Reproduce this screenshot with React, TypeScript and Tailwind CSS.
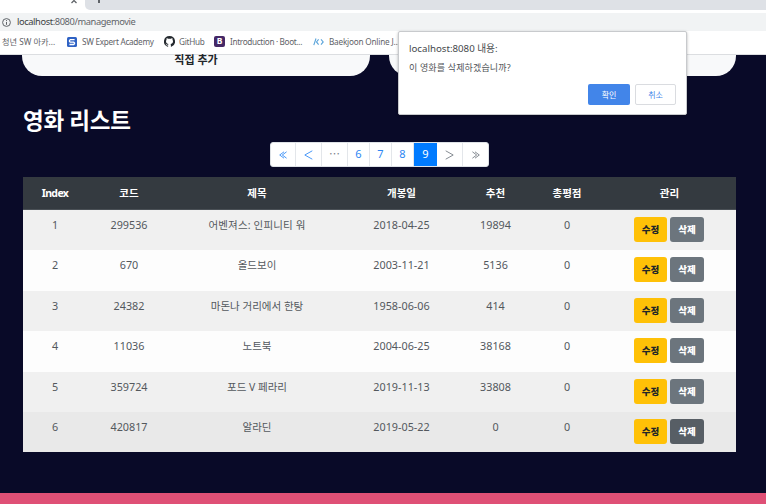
import React from "react";

const movies = [
  { id: 1, code: "299536", title: "어벤져스: 인피니티 워", date: "2018-04-25", likes: "19894", h: "h-[40px]", bg: "bg-[#f0f0f0]", gap: "tracking-[0.15px]" },
  { id: 2, code: "670", title: "올드보이", date: "2003-11-21", likes: "5136", h: "h-[41px]", bg: "bg-[#fdfdfd]", gap: "" },
  { id: 3, code: "24382", title: "마돈나 거리에서 한탕", date: "1958-06-06", likes: "414", h: "h-[40px]", bg: "bg-[#f0f0f0]", gap: "" },
  { id: 4, code: "11036", title: "노트북", date: "2004-06-25", likes: "38168", h: "h-[41px]", bg: "bg-[#fdfdfd]", gap: "" },
  { id: 5, code: "359724", title: "포드 V 페라리", date: "2019-11-13", likes: "33808", h: "h-[40px]", bg: "bg-[#f0f0f0]", gap: "" },
  { id: 6, code: "420817", title: "알라딘", date: "2019-05-22", likes: "0", h: "h-[40px]", bg: "bg-[#e9e9e9]", gap: "" },
];

const columns = "grid grid-cols-[64px_84px_172px_117px_71px_72px_133px]";
const uiFont = "font-['Noto_Sans','Noto_Sans_CJK_KR',sans-serif]";

function BrowserChrome() {
  return (
    <header className="h-[55px] shrink-0 bg-white text-[#5f6368]">
      <div className="flex h-[10px] overflow-hidden bg-white">
        <div className="flex w-[85px] shrink-0 justify-end pr-[7px]">
          <svg width="8" height="5" viewBox="0 0 8 5" fill="none" stroke="#5f6368" strokeWidth="1.3">
            <path d="M1.5 3 4 .5 6.5 3" />
          </svg>
        </div>
        <div className="flex-1 rounded-bl-[5px] bg-[#dee1e6] pl-[13px]">
          <div className="h-[3px] w-[1.5px] bg-[#5f6368]" />
        </div>
      </div>
      <div className="mt-[3px] flex h-[18px] items-center bg-[#f1f3f4] pl-[2px]">
        <svg width="9" height="9" viewBox="0 0 9 9" fill="none" stroke="#5f6368" strokeWidth="1">
          <circle cx="4.5" cy="4.5" r="3.9" />
          <path d="M4.5 4v2.8M4.5 2.1v1" />
        </svg>
        <span className="ml-[6px] whitespace-nowrap text-[9.3px] leading-[18px] tracking-[-0.4px]">
          <span className="text-[#3c4043]">localhost</span>:8080/managemovie
        </span>
      </div>
      <nav className="flex h-[24px] items-center border-b border-[#dcdee1] pb-[2px] pl-[2px] text-[8.2px] leading-[22px] text-[#5f6368]">
        <span className="w-[65px] whitespace-nowrap">청년 SW 아카...</span>
        <div className="flex w-[97px] items-center">
          <svg width="10" height="10" viewBox="0 0 10 10">
            <rect width="10" height="10" rx="1.5" fill="#2f62c4" />
            <path d="M7.6 2.6H3.3L2.5 3.5v1l.7.7h3.6l.7.7v.8l-.8.8H2.4" fill="none" stroke="white" strokeWidth="1.3" />
          </svg>
          <span className="ml-[5px] whitespace-nowrap tracking-[-0.3px]"><span className="tracking-[-0.28px]">SW Expert Academy</span></span>
        </div>
        <div className="flex w-[50px] items-center">
          <svg width="11" height="11" viewBox="0 0 16 16" fill="#24292e">
            <path d="M8 0a8 8 0 0 0-2.53 15.59c.4.07.55-.17.55-.38v-1.49c-2.01.37-2.53-.49-2.69-.94-.09-.23-.48-.94-.82-1.13-.28-.15-.68-.52-.01-.53.63-.01 1.08.58 1.23.82.72 1.21 1.87.87 2.33.66.07-.52.28-.87.51-1.07-1.78-.2-3.64-.89-3.64-3.95 0-.87.31-1.59.82-2.15-.08-.2-.36-1.02.08-2.12 0 0 .67-.21 2.2.82a7.5 7.5 0 0 1 4 0c1.53-1.04 2.2-.82 2.2-.82.44 1.1.16 1.92.08 2.12.51.56.82 1.27.82 2.15 0 3.07-1.87 3.75-3.65 3.95.29.25.54.73.54 1.48v2.2c0 .21.15.46.55.38A8 8 0 0 0 8 0Z" />
          </svg>
          <span className="ml-[4px] tracking-[-0.3px]">GitHub</span>
        </div>
        <div className="flex w-[99px] items-center">
          <div className="flex size-[11px] items-center justify-center rounded-[2px] bg-[#452866] text-[8.5px] font-bold leading-none text-white">B</div>
          <span className="ml-[5px] whitespace-nowrap tracking-[-0.33px]">Introduction · Boot...</span>
        </div>
        <div className="flex items-center">
          <svg width="11" height="8" viewBox="0 0 11 8" fill="none" stroke="#5ba4da" strokeWidth="1.1">
            <path d="M3 .5.8 7.2M5.6 1.3 3.5 3.9l2.1 2.7" />
            <path d="m8 1.3 2.2 2.6L8 6.6" />
          </svg>
          <span className="ml-[5px] whitespace-nowrap tracking-[-0.2px]">Baekjoon Online J...</span>
        </div>
      </nav>
    </header>
  );
}

function ConfirmDialog() {
  return (
    <div role="dialog" className="absolute left-[398px] top-[31px] flex h-[84px] w-[289px] flex-col rounded-[2px] border border-[#c8cacd] bg-white px-[10px] pt-[9px] shadow-[0_1px_3px_rgba(0,0,0,0.3)]">
      <h2 className="text-[9.7px] leading-[16px] text-[#45484c]">localhost:8080 내용:</h2>
      <p className="mt-[3px] text-[9px] leading-[16px] tracking-[0.15px] text-[#505357]">이 영화를 삭제하겠습니까?</p>
      <div className="mt-[8px] flex justify-end gap-[5px] text-[8px]">
        <button className="h-[21px] w-[42px] rounded-[2px] bg-[#4285e9] text-white">확인</button>
        <button className="h-[21px] w-[41px] rounded-[2px] border border-[#dadce0] text-[#4285e9]">취소</button>
      </div>
    </div>
  );
}

function Pagination() {
  const cell = "flex h-full items-center justify-center border-r border-[#e3e6ea]";
  return (
    <nav className="ml-[270px] flex h-[25px] w-[219px] overflow-hidden rounded-[3px] border border-[#dee2e6] bg-white text-[11px] text-[#2d87f3]">
      <span className={`${cell} w-[25px]`}>
        <svg width="8" height="8" viewBox="0 0 8 8" fill="none" stroke="#4b99f7"><path d="M5 .8.7 4 5 7.2M7.6 .8 3.3 4l4.3 3.2" /></svg>
      </span>
      <span className={`${cell} w-[26px]`}>
        <svg width="9" height="10" viewBox="0 0 9 10" fill="none" stroke="#4b99f7"><path d="M8.3 .8.8 5l7.5 4.2" /></svg>
      </span>
      <span className={`${cell} w-[26px] text-[#7b8188]`}>⋯</span>
      <span className={`${cell} w-[22px]`}>6</span>
      <span className={`${cell} w-[22px]`}>7</span>
      <span className={`${cell} w-[22px]`}>8</span>
      <span className="flex w-[23px] items-center justify-center bg-[#007bff] text-white">9</span>
      <span className={`${cell} w-[26px]`}>
        <svg width="9" height="10" viewBox="0 0 9 10" fill="none" stroke="#868c93"><path d="M.7 .8 8.2 5 .7 9.2" /></svg>
      </span>
      <span className="flex w-[25px] items-center justify-center">
        <svg width="8" height="8" viewBox="0 0 8 8" fill="none" stroke="#868c93"><path d="M.4.8 4.7 4 .4 7.2M3 .8 7.3 4 3 7.2" /></svg>
      </span>
    </nav>
  );
}

function MovieTable() {
  return (
    <section className="ml-[23px] mt-[10px] w-[713px] text-center text-[10.8px] text-[#53585d]">
      <div className={`${columns} h-[33px] border-b border-[#4a5056] bg-[#343a40] text-[10.5px] font-bold leading-[32px] text-white`}>
        {["Index", "코드", "제목", "개봉일", "추천", "총평점", "관리"].map((label) => (
          <span key={label} className={label === "Index" ? "tracking-[-0.6px]" : ""}>{label}</span>
        ))}
      </div>
      {movies.map((movie) => (
        <div key={movie.id} className={`${columns} ${movie.h} ${movie.bg} leading-[30px]`}>
          <span>{movie.id}</span>
          <span>{movie.code}</span>
          <span className={`text-[10.5px] leading-[31px] ${movie.gap}`}>{movie.title}</span>
          <span>{movie.date}</span>
          <span>{movie.likes}</span>
          <span>0</span>
          <span className="flex justify-center gap-[3px] pr-[1px] pt-[7px] text-[9.5px] font-black leading-[25px]">
            <button className="h-[25px] w-[33px] rounded-[3px] bg-[#ffc107] text-[#212529]">수정</button>
            <button className={`h-[25px] w-[34px] rounded-[3px] text-white ${movie.id === 6 ? "bg-[#575e65]" : "bg-[#6c757d]"}`}>삭제</button>
          </span>
        </div>
      ))}
    </section>
  );
}

export default function App() {
  return (
    <div className={`relative flex h-[504px] w-[766px] flex-col overflow-hidden bg-[#090a28] ${uiFont}`}>
      <BrowserChrome />
      <main className="flex-1">
        <div className="ml-[22px] flex h-[21px] gap-[19px] text-[11px] font-bold leading-[10px] text-[#212529]">
          <div className="w-[348px] rounded-b-[20px] bg-[#f8f9fa] text-center">직접 추가</div>
          <div className="w-[347px] rounded-b-[20px] bg-[#f8f9fa]" />
        </div>
        <h1 className="ml-[23px] mt-[30px] h-[36px] whitespace-nowrap text-[22.5px] font-bold leading-[30px] tracking-[-0.3px] text-white">영화 리스트</h1>
        <Pagination />
        <MovieTable />
      </main>
      <footer className="h-[11px] shrink-0 bg-[#df5076]" />
      <ConfirmDialog />
    </div>
  );
}
